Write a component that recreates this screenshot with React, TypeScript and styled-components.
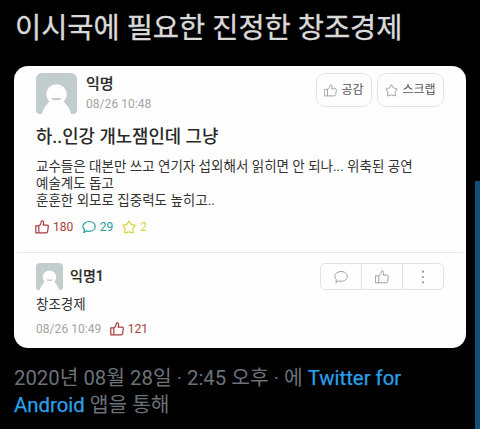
import React from "react";
import styled, { createGlobalStyle } from "styled-components";

const Global = createGlobalStyle`
  html, body { margin: 0; background: #000; }
  * { box-sizing: border-box; }
  body { font-family: Roboto, "Noto Sans CJK KR", sans-serif; }
`;

const Screen = styled.main`
  display: flex;
  width: 480px;
  height: 429px;
  overflow: hidden;
  background: #000;
`;

const Tweet = styled.article`
  width: 475px;
  padding: 9px 9px 0 14px;
`;

const Edge = styled.aside`
  width: 5px;
  margin-top: 181px;
  background: #124f77;
`;

const Title = styled.h1`
  margin: 0 0 17px 1px;
  height: 40px;
  line-height: 40px;
  font-size: 28.45px;
  font-weight: 400;
  color: #d9d9d9;
  -webkit-text-stroke: 0.35px #d9d9d9;
  white-space: nowrap;
`;

const Card = styled.section`
  width: 452px;
  height: 282px;
  border-radius: 14px;
  background: #fefefe;
  overflow: hidden;
`;

const Post = styled.div`
  height: 187px;
  margin: 0 3px;
  padding: 7px 19px 0;
  border-bottom: 1px solid #e8e8e8;
`;

const Comment = styled.div`
  padding: 10px 22px 0;
`;

const Header = styled.header<{ $height: number }>`
  display: flex;
  height: ${(p) => p.$height}px;
`;

const AvatarBox = styled.svg<{ $size: number }>`
  flex: none;
  width: ${(p) => p.$size}px;
  height: ${(p) => p.$size}px;
`;

const Author = styled.div<{ $gap: number }>`
  flex: 1;
  padding-left: ${(p) => p.$gap}px;
`;

const Name = styled.div<{ $line: number; $size: number }>`
  height: ${(p) => p.$line}px;
  line-height: ${(p) => p.$line}px;
  font-size: ${(p) => p.$size}px;
  font-weight: 500;
  color: #2b2b2b;
  -webkit-text-stroke: 0.2px #2b2b2b;
`;

const Time = styled.time`
  display: block;
  line-height: 16px;
  font-size: 12px;
  letter-spacing: 0.05px;
  color: #a3a3a3;
  white-space: nowrap;
`;

const Pills = styled.div`
  display: flex;
  gap: 5px;
`;

const Pill = styled.button<{ $width: number }>`
  display: flex;
  align-items: center;
  justify-content: center;
  gap: 4px;
  width: ${(p) => p.$width}px;
  height: 34px;
  padding: 0;
  border: 1px solid #e3e3e3;
  border-radius: 9px;
  background: #fefefe;
  color: #949494;
`;

const PillLabel = styled.span`
  font: 400 12px/16px Roboto, "Noto Sans CJK KR", sans-serif;
  color: #555;
`;

const Heading = styled.h2`
  margin: 0;
  height: 30px;
  line-height: 30px;
  font-size: 17.8px;
  font-weight: 500;
  color: #292929;
  white-space: nowrap;
`;

const Body = styled.p<{ $top: number }>`
  margin: ${(p) => p.$top}px 0 0;
  line-height: 17px;
  font-size: 13.53px;
  color: #333;
  white-space: nowrap;
`;

const Stats = styled.div<{ $top: number }>`
  display: flex;
  align-items: center;
  height: 16px;
  margin-top: ${(p) => p.$top}px;
`;

const Stat = styled.span<{ $color: string; $before: number }>`
  display: flex;
  align-items: center;
  gap: 4px;
  margin-left: ${(p) => p.$before}px;
  font-size: 12px;
  line-height: 16px;
  color: ${(p) => p.$color};
`;

const Actions = styled.div`
  display: flex;
  width: 124px;
  height: 27px;
  border: 1px solid #e3e3e3;
  border-radius: 5px;
  color: #949494;
`;

const Action = styled.button`
  flex: 1;
  display: grid;
  place-items: center;
  padding: 0;
  border: 0;
  background: none;
  color: inherit;
  & + & { border-left: 1px solid #e3e3e3; }
`;

const Meta = styled.footer`
  margin-top: 17px;
  font-size: 20.33px;
  line-height: 27px;
  color: #6b7278;
  white-space: nowrap;
`;

const Link = styled.span`
  color: #2ba0ea;
  -webkit-text-stroke: 0.25px #2ba0ea;
`;

const Glyph = styled.svg<{ $size: number }>`
  flex: none;
  width: ${(p) => p.$size}px;
  height: ${(p) => p.$size}px;
  fill: none;
  stroke: currentColor;
  stroke-linejoin: round;
  stroke-linecap: round;
`;

type IconProps = { size?: number; weight?: number };

const Thumb = ({ size = 14, weight = 1.2 }: IconProps) => (
  <Glyph $size={size} viewBox="0 0 14 14" strokeWidth={weight}>
    <path d="M.8 5.8h3v7H.8zM3.800 5.800c1.700-.8 2.400-2.200 2.500-4 .1-1.500 2.300-1.300 2.300.6 0 1-.1 1.900-.4 2.700h3.800c1 0 1.500.6 1.300 1.500l-.7 5c-.1.8-.7 1.200-1.500 1.200H3.800" />
  </Glyph>
);

const Bubble = ({ size = 14, weight = 1.2 }: IconProps) => (
  <Glyph $size={size} viewBox="0 0 14 14" strokeWidth={weight}>
    <path d="M7.200 1.500c3.400 0 6 2.100 6 4.900s-2.600 4.900-6 4.900c-.9 0-1.800-.1-2.600-.4L1.900 12.600l.5-3.100C1.400 8.700.9 7.600.9 6.400c0-2.800 2.900-4.900 6.300-4.900z" />
  </Glyph>
);

const Star = ({ size = 14, weight = 1.2 }: IconProps) => (
  <Glyph $size={size} viewBox="0 0 14 14" strokeWidth={weight}>
    <path d="M7 1 9.200 4.300 13.200 5.400 10.900 8.600 11.200 12.900 7 11.800 2.800 12.900 3.100 8.600.8 5.400 4.800 4.300z" />
  </Glyph>
);

const More = () => (
  <Glyph $size={14} viewBox="0 0 14 14" strokeWidth={0}>
    <g fill="currentColor">
      <circle cx="7" cy="1.700" r="1.100" />
      <circle cx="7" cy="7" r="1.100" />
      <circle cx="7" cy="12.300" r="1.100" />
    </g>
  </Glyph>
);

const Avatar = ({ size }: { size: number }) => (
  <AvatarBox $size={size} viewBox="0 0 40 40">
    <path d="M6 0h28a6 6 0 0 1 6 6v30q0 3-3 4H3q-3-1-3-4V6a6 6 0 0 1 6-6z" fill="#c1cccd" />
    <path d="M5.500 40.500C7 35 10 30 14 27.500h12C30 30 33 35 34.500 40.500z" fill="#fefefe" />
    <circle cx="20" cy="21" r="10" fill="#fefefe" />
    <path d="M15 24.300h10c-1.500 3-8.500 3-10 0z" fill="#c1cccd" />
  </AvatarBox>
);

export default function App() {
  return (
    <>
      <Global />
      <Screen>
        <Tweet>
          <Title>이시국에 필요한 진정한 창조경제</Title>
          <Card>
            <Post>
              <Header $height={49}>
                <Avatar size={41} />
                <Author $gap={9}>
                  <Name $line={23} $size={15}>익명</Name>
                  <Time>08/26 10:48</Time>
                </Author>
                <Pills>
                  <Pill $width={56}><Thumb size={13} weight={0.9} /><PillLabel>공감</PillLabel></Pill>
                  <Pill $width={67}><Star size={13} weight={0.9} /><PillLabel>스크랩</PillLabel></Pill>
                </Pills>
              </Header>
              <Heading>하..인강 개노잼인데 그냥</Heading>
              <Body $top={6}>
                교수들은 대본만 쓰고 연기자 섭외해서 읽히면 안 되나... 위축된 공연<br />
                예술계도 돕고<br />
                훈훈한 외모로 집중력도 높히고..
              </Body>
              <Stats $top={10}>
                <Stat $color="#a73c3c" $before={-1}><Thumb />180</Stat>
                <Stat $color="#269da0" $before={8.5}><Bubble />29</Stat>
                <Stat $color="#d9d43f" $before={9}><Star />2</Stat>
              </Stats>
            </Post>
            <Comment>
              <Header $height={32}>
                <Avatar size={27} />
                <Author $gap={7}><Name $line={26} $size={14}>익명1</Name></Author>
                <Actions>
                  <Action><Bubble weight={0.9} /></Action>
                  <Action><Thumb weight={0.9} /></Action>
                  <Action><More /></Action>
                </Actions>
              </Header>
              <Body $top={1}>창조경제</Body>
              <Stats $top={8}>
                <Time>08/26 10:49</Time>
                <Stat $color="#a73c3c" $before={8.5}><Thumb />121</Stat>
              </Stats>
            </Comment>
          </Card>
          <Meta>
            2020년 08월 28일 · 2:45 오후 · 에 <Link>Twitter for<br />Android</Link> 앱을 통해
          </Meta>
        </Tweet>
        <Edge />
      </Screen>
    </>
  );
}
